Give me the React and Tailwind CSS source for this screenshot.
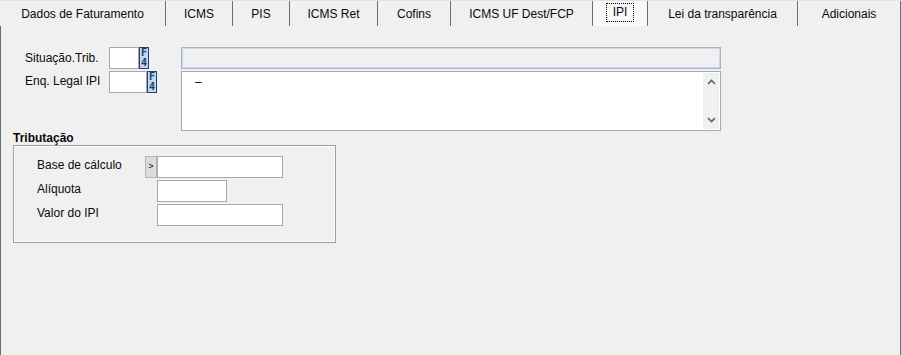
import React from 'react'

const tabs = [
    { label: 'Dados de Faturamento', w: 'w-[166px]' },
    { label: 'ICMS', w: 'w-[67px]' },
    { label: 'PIS', w: 'w-[57px]' },
    { label: 'ICMS Ret', w: 'w-[88px]' },
    { label: 'Cofins', w: 'w-[73px]' },
    { label: 'ICMS UF Dest/FCP', w: 'w-[142px]' },
    { label: 'IPI', w: 'w-[55px]', active: true },
    { label: 'Lei da transparência', w: 'w-[150px]' },
    { label: 'Adicionais', w: 'flex-1' },
]

// botao F4 azul
const BotaoF4 = () => (
    <div className="w-[10px] h-[22px] flex-none bg-[#c9d3e3] border border-[#18437e] flex flex-col items-center justify-center text-[#123d78] font-bold text-[10px] leading-[10px] font-['DejaVu_Sans_Mono',monospace] overflow-hidden">
        <span>F</span>
        <span>4</span>
    </div>
)

const App = () => {
    return (
        <div className="w-[901px] h-[355px] bg-[#f0f0f0] flex flex-col font-['Liberation_Sans',Arial,sans-serif] text-[12px] text-[#0a0a0a] overflow-hidden">

            {/* abas */}
            <div className="flex h-[26px] border-t border-[#e4e4e4]">
                {tabs.map((t, i) => (
                    <div key={i} className={`${t.w} h-full flex items-center justify-center border-r border-[#6e6e6e] ${t.active ? 'bg-[#f9f9f9]' : 'bg-[#f0f0f0]'}`}>
                        {t.active ? (
                            <span className="px-[6px] py-[2px] border border-dotted border-black leading-[13px] -mt-[2px]">{t.label}</span>
                        ) : (
                            <span>{t.label}</span>
                        )}
                    </div>
                ))}
            </div>

            {/* conteudo */}
            <div className="flex-1 border-l border-r border-[#6e6e6e] pt-[21px]">

                {/* linha superior */}
                <div className="flex">
                    {/* coluna esquerda */}
                    <div className="w-[180px] pl-[24px] flex flex-col gap-[2px]">
                        <div className="flex items-start">
                            <span className="w-[84px] flex-none whitespace-nowrap pt-[2px]">Situação.Trib.</span>
                            <div className="w-[30px] h-[22px] flex-none bg-white border border-[#a9a9a9]"></div>
                            <BotaoF4 />
                        </div>
                        <div className="flex items-start">
                            <span className="w-[84px] flex-none whitespace-nowrap pt-[1px]">Enq. Legal IPI</span>
                            <div className="w-[38px] h-[22px] flex-none bg-white border border-[#a9a9a9]"></div>
                            <BotaoF4 />
                        </div>
                    </div>

                    {/* coluna direita */}
                    <div className="w-[540px] flex flex-col gap-[2px]">
                        <div className="h-[22px] bg-[#f0f0f0] border border-[#a7b5c8] shadow-[inset_0_0_0_1px_#c7d9ef]"></div>
                        <div className="h-[60px] bg-white border border-[#a9a9a9] flex">
                            <div className="flex-1 pl-[13px] pt-[2px] leading-[16px]">–</div>
                            <div className="w-[16px] my-[1px] mr-[1px] bg-[#f0f0f0] flex flex-col items-center justify-between py-[6px]">
                                <svg width="9" height="6" viewBox="0 0 9 6">
                                    <path d="M1 5 L4.5 1.5 L8 5" fill="none" stroke="#606060" strokeWidth="1.6" />
                                </svg>
                                <svg width="9" height="6" viewBox="0 0 9 6">
                                    <path d="M1 1 L4.5 4.5 L8 1" fill="none" stroke="#606060" strokeWidth="1.6" />
                                </svg>
                            </div>
                        </div>
                    </div>
                </div>

                {/* tributacao */}
                <div className="pl-[12px] mt-[1px]">
                    <div className="font-bold leading-[13px] h-[13px]">Tributação</div>
                    <div className="w-[323px] h-[98px] border border-[#a0a0a0] shadow-[inset_0_0_0_1px_#fafafa] pl-[23px] pt-[10px] flex flex-col gap-[2px]">
                        <div className="flex items-start">
                            <span className="w-[108px] flex-none whitespace-nowrap">Base de cálculo</span>
                            <div className="w-[12px] h-[22px] flex-none bg-[#dcdcdc] border border-[#b5b5b5] flex items-center justify-center text-[9px]">&gt;</div>
                            <div className="w-[126px] h-[22px] flex-none bg-white border border-[#a9a9a9]"></div>
                        </div>
                        <div className="flex items-start">
                            <span className="w-[120px] flex-none whitespace-nowrap">Alíquota</span>
                            <div className="w-[70px] h-[22px] flex-none bg-white border border-[#a9a9a9]"></div>
                        </div>
                        <div className="flex items-start">
                            <span className="w-[120px] flex-none whitespace-nowrap">Valor do IPI</span>
                            <div className="w-[126px] h-[22px] flex-none bg-white border border-[#a9a9a9]"></div>
                        </div>
                    </div>
                </div>

            </div>
        </div>
    )
}

export default App
